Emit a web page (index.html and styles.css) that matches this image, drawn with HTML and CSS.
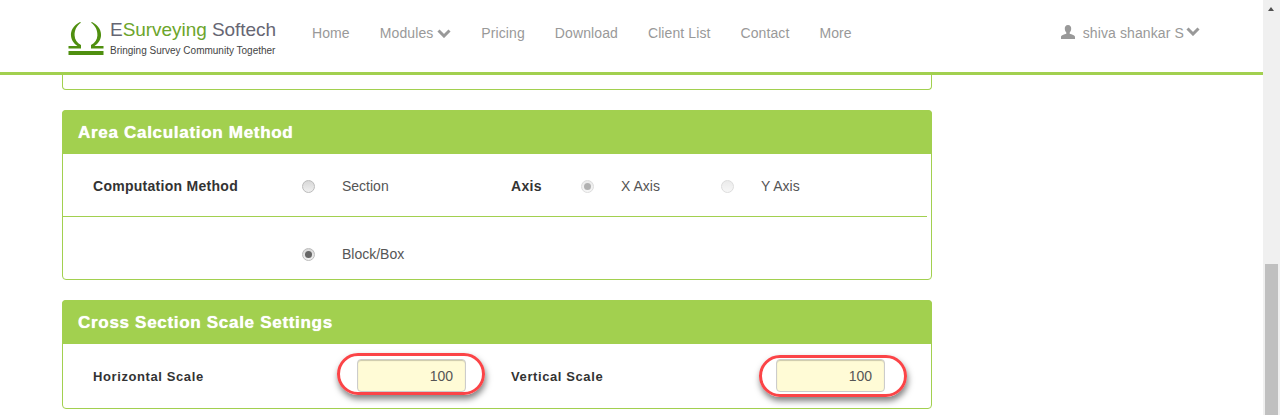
FILE: index.html
```html
<!DOCTYPE html>
<html lang="en">
<head>
<meta charset="utf-8">
<title>ESurveying Softech</title>
<link rel="stylesheet" href="styles.css">
</head>
<body>
<div class="page">
  <div class="main">
    <header class="topbar">
      <a class="brand">
        <svg class="brand-mark" width="36" height="33" viewBox="0 0 36 33">
          <path d="M12 0 C5 3.500 2.500 9 3 14 C3.500 19 7 22.500 9.500 24 L0.500 24 L0.500 26.500 L13 26.500 L13 23 C9 21 6.800 17.500 6.600 13.500 C6.400 8.500 8.500 3.500 13 0.800 Z" fill="#4f8f0f"/>
          <path d="M24 0 C31 3.500 33.500 9 33 14 C32.500 19 29 22.500 26.500 24 L35.500 24 L35.500 26.500 L23 26.500 L23 23 C27 21 29.200 17.500 29.400 13.500 C29.600 8.500 27.500 3.500 23 0.800 Z" fill="#4f8f0f"/>
          <rect x="0.500" y="29" width="35" height="4" fill="#4f8f0f"/>
        </svg>
        <span class="brand-text">
          <span class="brand-name"><span class="grey">E</span><span class="green">Surveying</span> <span class="grey">Softech</span></span>
          <span class="brand-tag">Bringing Survey Community Together</span>
        </span>
      </a>
      <nav class="nav">
        <a>Home</a>
        <a>Modules <svg class="chev" width="14" height="10" viewBox="0 0 14 10"><path d="M1.500 2.500 L7 8 L12.500 2.500" fill="none" stroke="#999" stroke-width="3"/></svg></a>
        <a>Pricing</a>
        <a>Download</a>
        <a>Client List</a>
        <a>Contact</a>
        <a>More</a>
      </nav>
      <div class="user">
        <svg width="14" height="14" viewBox="0 0 14 14"><path d="M7 0 C9.300 0 10.300 1.800 10.200 3.800 C10.100 5.500 9.500 6.800 8.700 7.600 L8.700 8.800 C10.500 9.600 14 10 14 12 L14 14 L0 14 L0 12 C0 10 3.500 9.600 5.300 8.800 L5.300 7.600 C4.500 6.800 3.900 5.500 3.800 3.800 C3.700 1.800 4.700 0 7 0 Z" fill="#999"/></svg>
        <span class="user-name">shiva shankar S</span>
        <svg class="chev" width="14" height="10" viewBox="0 0 14 10"><path d="M1.500 2.500 L7 8 L12.500 2.500" fill="none" stroke="#999" stroke-width="3"/></svg>
      </div>
    </header>

    <div class="content">
      <div class="panel-tail"></div>

      <section class="panel">
        <h2 class="panel-title">Area Calculation Method</h2>
        <div class="row row-first">
          <span class="label">Computation Method</span>
          <span class="radio"></span>
          <span class="opt">Section</span>
          <span class="label">Axis</span>
          <span class="radio checked faded"></span>
          <span class="opt">X Axis</span>
          <span class="radio faded"></span>
          <span class="opt">Y Axis</span>
        </div>
        <div class="row row-second">
          <span></span>
          <span class="radio checked"></span>
          <span class="opt">Block/Box</span>
        </div>
      </section>

      <section class="panel">
        <h2 class="panel-title">Cross Section Scale Settings</h2>
        <div class="scale-row">
          <span class="label label-small">Horizontal Scale</span>
          <span class="scale-field"><span class="scale-input">100</span><span class="ring ring-a"></span></span>
          <span class="label label-small">Vertical Scale</span>
          <span class="scale-field"><span class="scale-input">100</span><span class="ring ring-b"></span></span>
        </div>
      </section>
    </div>
  </div>
  <div class="scrollbar">
    <span class="arrow"></span>
    <span class="thumb"></span>
  </div>
</div>
</body>
</html>
```
FILE: styles.css
```css
* { box-sizing: border-box; }
html, body { margin: 0; padding: 0; height: 415px; overflow: hidden; background: #fff; }
body { font-family: "Liberation Sans", Arial, sans-serif; font-size: 14px; color: #333; }

.page { display: flex; width: 1280px; height: 415px; }
.main { width: 1263px; flex: none; }

.topbar {
  display: flex;
  align-items: flex-start;
  height: 75px;
  border-bottom: 3px solid #a2d04f;
  padding-left: 68px;
}
.brand { display: flex; width: 244px; padding-top: 22px; flex: none; }
.brand-mark { flex: none; margin-right: 6px; }
.brand-text { display: flex; flex-direction: column; margin-top: -3px; }
.brand-name { font-size: 19px; line-height: 22px; letter-spacing: -0.05px; white-space: nowrap; }
.grey { color: #666673; }
.green { color: #6ca52c; }
.brand-tag { font-size: 10px; line-height: 14px; color: #444; white-space: nowrap; margin-top: 3px; }

.nav { display: flex; gap: 30px; padding-top: 25px; color: #999; line-height: 16px; letter-spacing: 0.1px; }
.nav a { white-space: nowrap; }
.chev { vertical-align: 0; }

.user {
  display: flex;
  align-items: flex-start;
  margin-left: 209px;
  padding-top: 25px;
  color: #999;
  line-height: 17px;
  letter-spacing: 0.1px;
  white-space: nowrap;
}
.user-name { margin-left: 8px; margin-right: 2px; }
.user .chev { margin-top: 1px; }

.content { padding-left: 62px; width: 932px; }
.panel-tail {
  height: 15px;
  border: 1px solid #a2d04f;
  border-top: 0;
  border-radius: 0 0 4px 4px;
  margin-bottom: 20px;
}
.panel {
  border: 1px solid #a2d04f;
  border-radius: 4px;
  margin-bottom: 20px;
}
.panel-title {
  margin: -1px -1px 0;
  height: 44px;
  padding: 0 16px;
  background: #a2d04f;
  border-radius: 4px 4px 0 0;
  color: #fff;
  font-size: 17px;
  line-height: 45px;
  font-weight: bold;
  letter-spacing: 0.7px;
  text-shadow: 0 0 1px #fff;
}

.row {
  display: grid;
  grid-template-columns: 209px 40px 169px 70px 40px 100px 40px 1fr;
  align-items: center;
  padding-left: 30px;
  margin-right: 4px;
}
.row-first { height: 63px; padding-top: 2px; border-bottom: 1px solid #a2d04f; }
.row-second { height: 62px; padding-top: 12px; }
.label { font-weight: bold; font-size: 14px; letter-spacing: 0.28px; color: #333; }
.label-small { font-size: 13px; letter-spacing: 0.6px; }
.opt { font-size: 14px; color: #555; }

.radio {
  width: 13px;
  height: 13px;
  border-radius: 50%;
  border: 1px solid #bbb;
  background: linear-gradient(#d8d8d8, #f0f0f0);
  position: relative;
  display: block;
}
.radio.faded { opacity: 0.5; }
.radio.checked::after {
  content: "";
  position: absolute;
  left: 2px;
  top: 2px;
  width: 7px;
  height: 7px;
  border-radius: 50%;
  background: #666;
}

.scale-row {
  display: grid;
  grid-template-columns: 264px 154px 265px 1fr;
  align-items: center;
  height: 64px;
  padding-left: 30px;
}
.scale-field { display: flex; position: relative; margin-top: -2px; }
.scale-input {
  width: 109px;
  height: 33px;
  background: #fffbd6;
  border: 1px solid #ccc;
  border-radius: 4px;
  box-shadow: inset 0 1px 1px rgba(0, 0, 0, .2);
  text-align: right;
  padding-right: 12px;
  line-height: 33px;
  color: #555;
}
.ring {
  position: absolute;
  width: 148px;
  height: 42px;
  border: 3px solid #fb4447;
  border-radius: 21px;
  box-shadow: 1px 4px 6px rgba(0, 0, 0, .5);
}
.ring-a { left: -20px; top: -6px; }
.ring-b { left: -17px; top: -4px; }

.scrollbar { position: relative; width: 17px; height: 415px; background: #f0f0f0; flex: none; }
.arrow {
  position: absolute;
  left: 5px;
  top: 7px;
  width: 0;
  height: 0;
  border: 3.500px solid transparent;
  border-top: 0;
  border-bottom: 4px solid #505050;
}
.thumb { position: absolute; left: 2px; top: 264px; width: 13px; height: 151px; background: #c0c0c0; }
```
